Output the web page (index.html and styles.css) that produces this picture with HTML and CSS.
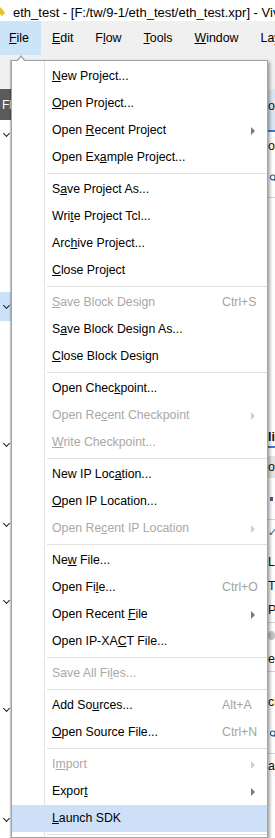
FILE: index.html
```html
<!DOCTYPE html>
<html lang="en">
<head>
  <meta charset="UTF-8" />
  <title>eth_test - Vivado</title>
  <link rel="stylesheet" href="styles.css">
</head>
<body>
<div class="window">
  <div class="titlebar">
    <svg class="app-icon" width="8" height="14" viewBox="0 0 8 14">
      <path d="M0 3 L3 6 L5 9 L2 12 L0 10 Z" fill="#e9c22b"/>
    </svg>
    <span class="title">eth_test - [F:/tw/9-1/eth_test/eth_test.xpr] - Vivado 2018.3</span>
  </div>

  <div class="menubar">
    <div class="menubar-item open"><u>F</u>ile</div>
    <div class="menubar-item"><u>E</u>dit</div>
    <div class="menubar-item">F<u>l</u>ow</div>
    <div class="menubar-item"><u>T</u>ools</div>
    <div class="menubar-item"><u>W</u>indow</div>
    <div class="menubar-item">Layout</div>
  </div>

  <div class="toolbar"></div>

  <div class="workspace">
    <!-- Flow Navigator (mostly under the menu) -->
    <div class="left-pane">
      <div class="lp-head">Fl</div>
      <div class="nav-section pm">
        <div class="nav-header"><span class="chev"></span></div>
        <div class="nav-body"></div>
      </div>
      <div class="nav-section ipi">
        <div class="nav-header active"><span class="chev"></span></div>
        <div class="nav-body"></div>
      </div>
      <div class="nav-section sim">
        <div class="nav-header"><span class="chev"></span></div>
        <div class="nav-body"></div>
      </div>
      <div class="nav-section rtl">
        <div class="nav-header"><span class="chev"></span></div>
        <div class="nav-body"></div>
      </div>
      <div class="nav-section syn">
        <div class="nav-header"><span class="chev"></span></div>
        <div class="nav-body"></div>
      </div>
      <div class="nav-section impl">
        <div class="nav-header"><span class="chev"></span></div>
        <div class="nav-body"></div>
      </div>
      <div class="nav-section pgm">
        <div class="nav-header"><span class="chev"></span></div>
      </div>
    </div>

    <div class="center-pane"></div>

    <!-- Sources / Properties panels peeking out on the right -->
    <div class="right-pane">
      <div class="rp-tab">ou</div>
      <div class="rp-blue-line"></div>
      <div class="rp-row rp-title">ou</div>
      <div class="rp-row rp-search">
        <svg width="8" height="11" viewBox="0 0 8 11"><circle cx="5" cy="4" r="3.2" fill="none" stroke="#3b5e8c" stroke-width="1.6"/><path d="M7 6.5 L9 9" stroke="#3b5e8c" stroke-width="1.8"/></svg>
      </div>
      <div class="rp-rule"></div>
      <div class="rp-tree"></div>
      <div class="rp-row rp-title bold">li</div>
      <div class="rp-blue-line"></div>
      <div class="rp-gap"></div>
      <div class="rp-row rp-gray">ou</div>
      <div class="rp-row rp-mark"><span class="purple"></span></div>
      <div class="rp-rule"></div>
      <div class="rp-row rp-check">✓</div>
      <div class="rp-row rp-text">Lo</div>
      <div class="rp-row rp-text">Ty</div>
      <div class="rp-row rp-text">P;</div>
      <div class="rp-rule"></div>
      <div class="rp-row rp-knob"><span class="knob"></span></div>
      <div class="rp-row rp-text">e</div>
      <div class="rp-rule"></div>
      <div class="rp-row rp-tall">cl</div>
      <div class="rp-row rp-search">
        <svg width="8" height="11" viewBox="0 0 8 11"><circle cx="5" cy="4" r="3.2" fill="none" stroke="#3b5e8c" stroke-width="1.6"/><path d="M7 6.5 L9 9" stroke="#3b5e8c" stroke-width="1.8"/></svg>
      </div>
      <div class="rp-rule"></div>
      <div class="rp-row rp-text">a</div>
    </div>
  </div>

  <!-- File menu -->
  <div class="dropdown">
    <div class="menu-item"><span class="label"><u>N</u>ew Project...</span></div>
    <div class="menu-item"><span class="label"><u>O</u>pen Project...</span></div>
    <div class="menu-item"><span class="label">Open <u>R</u>ecent Project</span><span class="arrow"></span></div>
    <div class="menu-item"><span class="label">Open Ex<u>a</u>mple Project...</span></div>
    <div class="sep"></div>
    <div class="menu-item"><span class="label">S<u>a</u>ve Project As...</span></div>
    <div class="menu-item"><span class="label">Wri<u>t</u>e Project Tcl...</span></div>
    <div class="menu-item"><span class="label">Arc<u>h</u>ive Project...</span></div>
    <div class="menu-item"><span class="label"><u>C</u>lose Project</span></div>
    <div class="sep"></div>
    <div class="menu-item disabled"><span class="label"><u>S</u>ave Block Design</span><span class="shortcut">Ctrl+S</span></div>
    <div class="menu-item"><span class="label">S<u>a</u>ve Block Design As...</span></div>
    <div class="menu-item"><span class="label"><u>C</u>lose Block Design</span></div>
    <div class="sep"></div>
    <div class="menu-item"><span class="label">Open Chec<u>k</u>point...</span></div>
    <div class="menu-item disabled"><span class="label">Open Re<u>c</u>ent Checkpoint</span><span class="arrow"></span></div>
    <div class="menu-item disabled"><span class="label"><u>W</u>rite Checkpoint...</span></div>
    <div class="sep"></div>
    <div class="menu-item"><span class="label">New IP Loc<u>a</u>tion...</span></div>
    <div class="menu-item"><span class="label"><u>O</u>pen IP Location...</span></div>
    <div class="menu-item disabled"><span class="label">Open Re<u>c</u>ent IP Location</span><span class="arrow"></span></div>
    <div class="sep"></div>
    <div class="menu-item"><span class="label">Ne<u>w</u> File...</span></div>
    <div class="menu-item"><span class="label">Open Fi<u>l</u>e...</span><span class="shortcut">Ctrl+O</span></div>
    <div class="menu-item"><span class="label">Open Recent <u>F</u>ile</span><span class="arrow"></span></div>
    <div class="menu-item"><span class="label">Open IP-XA<u>C</u>T File...</span></div>
    <div class="sep"></div>
    <div class="menu-item disabled"><span class="label">Save All Fi<u>l</u>es...</span></div>
    <div class="sep"></div>
    <div class="menu-item"><span class="label">Add So<u>u</u>rces...</span><span class="shortcut">Alt+A</span></div>
    <div class="menu-item"><span class="label"><u>O</u>pen Source File...</span><span class="shortcut">Ctrl+N</span></div>
    <div class="sep"></div>
    <div class="menu-item disabled"><span class="label">I<u>m</u>port</span><span class="arrow"></span></div>
    <div class="menu-item"><span class="label">Expor<u>t</u></span><span class="arrow"></span></div>
    <div class="menu-item active"><span class="label"><u>L</u>aunch SDK</span></div>
    <div class="sep"></div>
  </div>
</div>
</body>
</html>
```

FILE: styles.css
```css
body {
  margin: 0;
  font-family: "Liberation Sans", Arial, sans-serif;
  color: #000;
}
.window {
  position: relative;
  width: 275px;
  height: 838px;
  overflow: hidden;
  background: #fff;
}

/* タイトルバー */
.titlebar {
  height: 21px;
  display: flex;
  align-items: flex-start;
  background: #fff;
  font-size: 13px;
  white-space: nowrap;
  overflow: hidden;
}
.app-icon {
  flex: none;
  margin-top: 4px;
}
.title {
  margin-left: 5px;
  padding-top: 4px;
  line-height: 17px;
}

/* メニューバー */
.menubar {
  height: 34px;
  display: flex;
  background: #f0f0f0;
  font-size: 12.4px;
  line-height: 34px;
  white-space: nowrap;
}
.menubar-item {
  padding: 0 11px;
}
.menubar-item:first-child {
  padding-left: 9px;
  padding-right: 12px;
}
.menubar-item.open {
  background: #cce4f7;
}
.toolbar {
  height: 34px;
  background: #f0f0f0;
}

.workspace {
  display: flex;
  height: 749px;
}

/* 左: Flow Navigator */
.left-pane {
  width: 11px;
  flex: none;
  overflow: hidden;
  white-space: nowrap;
  font-size: 12px;
}
.lp-head {
  height: 31px;
  line-height: 33px;
  padding-left: 2px;
  background: #5b5b5b;
  color: #fff;
}
.nav-header {
  height: 30px;
  display: flex;
  align-items: center;
  padding-left: 3px;
}
.nav-header.active {
  height: 29px;
  background: #cce0f7;
}
.chev {
  flex: none;
  width: 4px;
  height: 4px;
  margin: -3px 6px 0 1px;
  border-right: 1.5px solid #222;
  border-bottom: 1.5px solid #222;
  transform: rotate(45deg);
}
.pm .nav-body   { height: 142px; }
.ipi .nav-body  { height: 109px; }
.sim .nav-body  { height: 50px; }
.rtl .nav-body  { height: 47px; }
.syn .nav-body  { height: 78px; }
.impl .nav-body { height: 80px; }

.center-pane {
  flex: 1;
}

/* 右: Sources / Properties */
.right-pane {
  width: 7px;
  flex: none;
  overflow: hidden;
  white-space: nowrap;
  font-size: 12.4px;
  color: #111;
}
.rp-tab {
  height: 41px;
  line-height: 34px;
  background: #dae6f4;
}
.rp-blue-line {
  height: 2px;
  background: #3f7cc8;
}
.rp-row {
  height: 24px;
  line-height: 24px;
}
.rp-title {
  height: 28px;
  line-height: 28px;
}
.rp-title.bold {
  font-weight: bold;
  height: 18px;
  line-height: 18px;
}
.rp-search {
  height: 37px;
  display: flex;
  align-items: center;
  padding-left: 1px;
}
.rp-rule {
  height: 1px;
  background: #d4d4d4;
}
.rp-tree {
  height: 230px;
}
.rp-gap {
  height: 8px;
}
.rp-gray {
  height: 22px;
  line-height: 22px;
  background: #e6e6e6;
}
.rp-mark {
  height: 41px;
  display: flex;
  align-items: center;
  padding-left: 2px;
}
.purple {
  width: 3px;
  height: 4px;
  background: #7a3c8c;
}
.rp-check {
  height: 30px;
  color: #555;
  font-size: 11px;
}
.rp-text {
  height: 24px;
}
.rp-knob {
  height: 24px;
  display: flex;
  align-items: center;
}
.knob {
  width: 9px;
  height: 9px;
  border-radius: 50%;
  background: #c4c4c4;
}
.rp-tall {
  height: 44px;
  line-height: 60px;
}

/* ファイルメニュー */
.dropdown {
  position: absolute;
  left: 11px;
  top: 60px;
  width: 257px;
  box-sizing: border-box;
  padding-top: 2px;
  border: 1px solid #a3a3a3;
  background: #fff linear-gradient(to right, transparent 32px, #e4e4e4 32px, #e4e4e4 33px, transparent 33px);
  box-shadow: 2px 2px 3px rgba(0, 0, 0, 0.35), -1px 0 1px rgba(0, 0, 0, 0.2);
  font-size: 12.3px;
  white-space: nowrap;
}
.dropdown::before {
  content: "";
  position: absolute;
  left: 4px;
  top: -6px;
  border-left: 5px solid transparent;
  border-right: 5px solid transparent;
  border-bottom: 6px solid #a3a3a3;
}
.dropdown::after {
  content: "";
  position: absolute;
  left: 5px;
  top: -4px;
  border-left: 4px solid transparent;
  border-right: 4px solid transparent;
  border-bottom: 5px solid #fff;
}
.menu-item {
  height: 27px;
  line-height: 27px;
  display: flex;
  align-items: center;
  padding: 0 12px 0 40px;
}
.menu-item .label {
  flex: 1;
}
.menu-item.disabled {
  color: #a9a9a9;
}
.menu-item.active {
  background: #cde0f7;
}
.shortcut {
  width: 34px;
  margin-right: -1px;
  color: #a3a3a3;
}
.arrow {
  width: 0;
  height: 0;
  border-top: 4px solid transparent;
  border-bottom: 4px solid transparent;
  border-left: 4px solid #7a7a7a;
}
.disabled .arrow {
  border-left-color: #cfcfcf;
}
.sep {
  height: 5px;
  margin-left: 35px;
  background: linear-gradient(#e0e0e0, #e0e0e0) no-repeat 0 2px / 100% 1px;
}
```
